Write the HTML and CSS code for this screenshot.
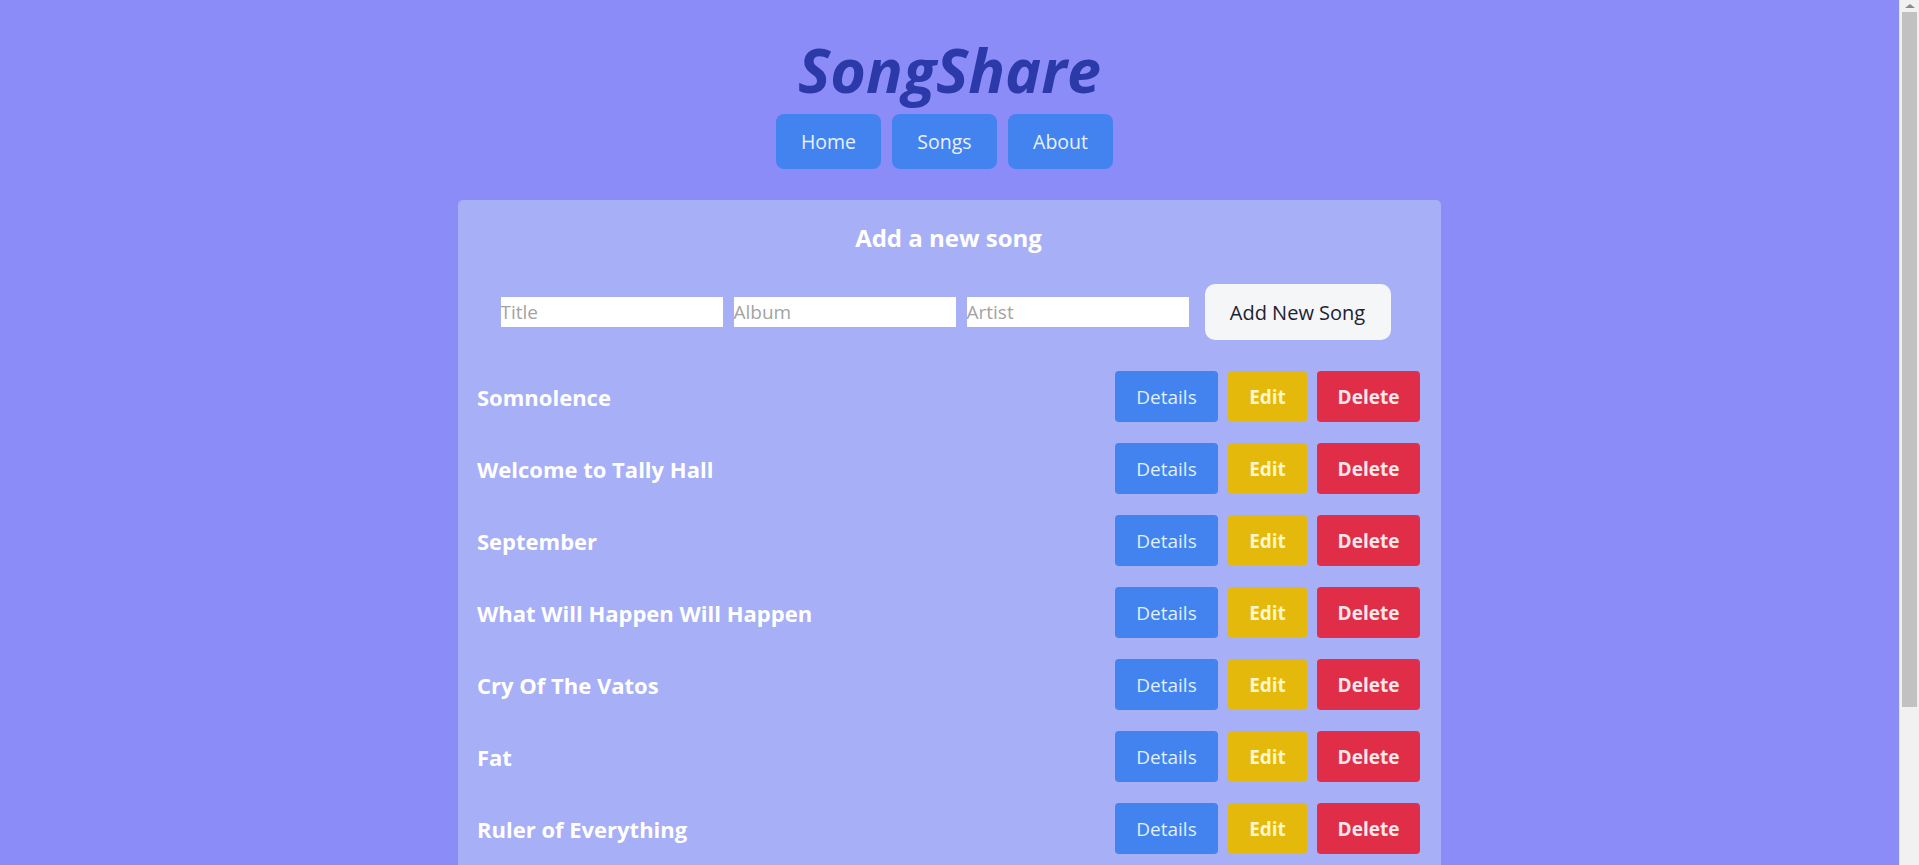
FILE: index.html
```html
<!DOCTYPE html>
<html lang="en">
<head>
<meta charset="utf-8">
<title>SongShare</title>
<link rel="stylesheet" href="styles.css">
</head>
<body>
<header class="header">
  <h1 class="logo">SongShare</h1>
  <nav class="nav">
    <a class="nav-btn" href="#">Home</a>
    <a class="nav-btn" href="#">Songs</a>
    <a class="nav-btn" href="#">About</a>
  </nav>
</header>
<main class="card">
  <h2 class="card-title">Add a new song</h2>
  <form class="add-form">
    <input class="field" type="text" placeholder="Title">
    <input class="field" type="text" placeholder="Album">
    <input class="field" type="text" placeholder="Artist">
    <button class="add-btn" type="button">Add New Song</button>
  </form>
  <ul class="song-list">
    <li class="song-row"><span class="song-name">Somnolence</span><div class="actions"><button class="btn btn-details">Details</button><button class="btn btn-edit">Edit</button><button class="btn btn-delete">Delete</button></div></li>
    <li class="song-row"><span class="song-name">Welcome to Tally Hall</span><div class="actions"><button class="btn btn-details">Details</button><button class="btn btn-edit">Edit</button><button class="btn btn-delete">Delete</button></div></li>
    <li class="song-row"><span class="song-name">September</span><div class="actions"><button class="btn btn-details">Details</button><button class="btn btn-edit">Edit</button><button class="btn btn-delete">Delete</button></div></li>
    <li class="song-row"><span class="song-name">What Will Happen Will Happen</span><div class="actions"><button class="btn btn-details">Details</button><button class="btn btn-edit">Edit</button><button class="btn btn-delete">Delete</button></div></li>
    <li class="song-row"><span class="song-name">Cry Of The Vatos</span><div class="actions"><button class="btn btn-details">Details</button><button class="btn btn-edit">Edit</button><button class="btn btn-delete">Delete</button></div></li>
    <li class="song-row"><span class="song-name">Fat</span><div class="actions"><button class="btn btn-details">Details</button><button class="btn btn-edit">Edit</button><button class="btn btn-delete">Delete</button></div></li>
    <li class="song-row"><span class="song-name">Ruler of Everything</span><div class="actions"><button class="btn btn-details">Details</button><button class="btn btn-edit">Edit</button><button class="btn btn-delete">Delete</button></div></li>
    <li class="song-row"><span class="song-name">Good Day</span><div class="actions"><button class="btn btn-details">Details</button><button class="btn btn-edit">Edit</button><button class="btn btn-delete">Delete</button></div></li>
    <li class="song-row"><span class="song-name">Banana Man</span><div class="actions"><button class="btn btn-details">Details</button><button class="btn btn-edit">Edit</button><button class="btn btn-delete">Delete</button></div></li>
  </ul>
</main>
<div class="scrollbar" aria-hidden="true">
  <div class="scroll-arrow"></div>
  <div class="scroll-thumb"></div>
</div>
</body>
</html>
```

FILE: styles.css
```css
* { box-sizing: border-box; }

html, body {
  margin: 0;
  padding: 0;
}

body {
  background: #8b8cf8;
  font-family: "Open Sans", "Noto Sans", "Liberation Sans", sans-serif;
  color: #ffffff;
  padding: 0 20px 16px 0;
}

.header {
  display: flex;
  flex-direction: column;
  align-items: center;
  padding-top: 39px;
}

.logo {
  margin: 0;
  font-size: 61px;
  line-height: 62px;
  font-weight: 700;
  font-style: italic;
  color: #2b3aa8;
  letter-spacing: 0;
}

.nav {
  display: flex;
  gap: 11px;
  margin-top: 13px;
  padding-right: 10px;
}

.nav-btn {
  display: flex;
  align-items: center;
  justify-content: center;
  width: 105px;
  height: 55px;
  background: #4383f0;
  border-radius: 8px;
  color: #e8f1ff;
  text-decoration: none;
  font-size: 19.5px;
  font-weight: 500;
}

.card {
  width: 983px;
  margin: 31px auto 0;
  background: #a7aff7;
  border-radius: 5px;
  padding: 22px 21px 20px 19px;
}

.card-title {
  margin: 0;
  text-align: center;
  font-size: 24px;
  line-height: 32px;
  font-weight: 700;
  color: #ffffff;
}

.add-form {
  display: flex;
  align-items: center;
  justify-content: center;
  margin: 30px 0 31px;
  gap: 11px;
  padding-right: 6px;
}

.field {
  width: 222px;
  height: 30px;
  border: none;
  padding: 0;
  margin: 0;
  background: #ffffff;
  font-family: inherit;
  font-size: 19px;
  color: #333;
  outline: none;
}

.field::placeholder {
  color: #a3a3a3;
}

.add-btn {
  margin-left: 5px;
  width: 186px;
  height: 56px;
  border: none;
  border-radius: 10px;
  background: #f5f6f8;
  color: #1f2230;
  font-family: inherit;
  font-size: 20px;
  font-weight: 500;
}

.song-list {
  list-style: none;
  margin: 0;
  padding: 0;
  display: flex;
  flex-direction: column;
  gap: 21px;
}

.song-row {
  display: flex;
  align-items: center;
  justify-content: space-between;
  height: 51px;
}

.song-name {
  font-size: 22px;
  font-weight: 700;
  color: #ffffff;
}

.actions {
  display: flex;
  gap: 10px;
}

.btn {
  height: 51px;
  border: none;
  border-radius: 4px;
  font-family: inherit;
  font-size: 19px;
  padding: 0;
}

.btn-details {
  width: 103px;
  background: #4383f0;
  color: #dff0ff;
  font-weight: 500;
}

.btn-edit {
  width: 79px;
  background: #e5b80c;
  color: #fff6cc;
  font-weight: 700;
}

.btn-delete {
  width: 103px;
  background: #e02e48;
  color: #ffe8ec;
  font-weight: 700;
}

.scrollbar {
  position: fixed;
  top: 0;
  right: 0;
  width: 20px;
  height: 100%;
  background: #f1f1f1;
  border-left: 1px solid #e4e4e4;
}

.scroll-arrow {
  position: absolute;
  top: 4px;
  left: 5px;
  width: 0;
  height: 0;
  border-left: 5px solid transparent;
  border-right: 5px solid transparent;
  border-bottom: 4px solid #8a8a8a;
}

.scroll-thumb {
  position: absolute;
  top: 12px;
  left: 2px;
  width: 15px;
  height: 695px;
  background: #c1c1c1;
}
```
